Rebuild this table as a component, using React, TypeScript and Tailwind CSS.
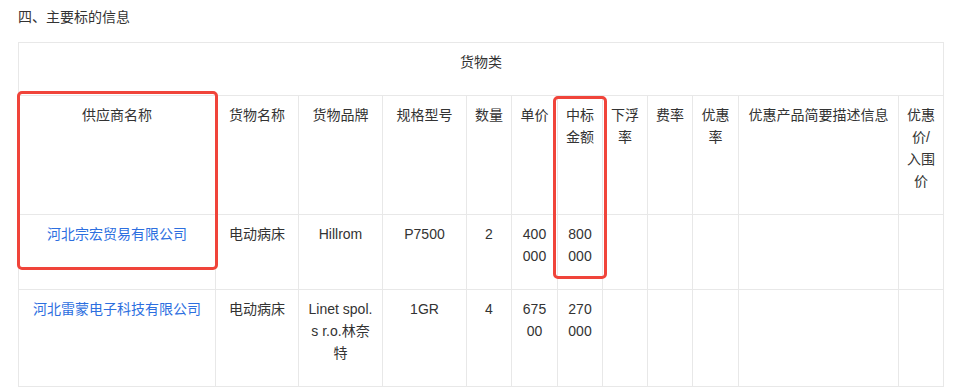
import React from "react";

const cols = [197, 83, 84, 84, 45, 46, 45, 45, 45, 46, 160, 45];
const colClasses = [
  "w-[197px]",
  "w-[83px]",
  "w-[84px]",
  "w-[84px]",
  "w-[45px]",
  "w-[46px]",
  "w-[45px]",
  "w-[45px]",
  "w-[45px]",
  "w-[46px]",
  "w-[160px]",
  "w-[45px]",
];

const headers = [
  "供应商名称",
  "货物名称",
  "货物品牌",
  "规格型号",
  "数量",
  "单价",
  "中标金额",
  "下浮率",
  "费率",
  "优惠率",
  "优惠产品简要描述信息",
  "优惠价/入围价",
];

const rows = [
  ["河北宗宏贸易有限公司", "电动病床", "Hillrom", "P7500", "2", "400000", "800000", "", "", "", "", ""],
  ["河北雷蒙电子科技有限公司", "电动病床", "Linet spol. s r.o.林奈特", "1GR", "4", "67500", "270000", "", "", "", "", ""],
];

const cell =
  "border border-[#e8e8e8] px-[8px] pt-[8px] pb-[22px] text-center align-top break-all leading-[22px]";

export default function App() {
  return (
    <div
      className="w-[954px] h-[392px] bg-white text-[14px] text-[#333333] px-[18px] pt-[6px]"
      style={{ fontFamily: '"Liberation Sans", "Noto Sans CJK SC", sans-serif' }}
    >
      <div className="leading-[22px]">四、主要标的信息</div>
      <div className="relative mt-[14px]">
        <table className="table-fixed border-collapse w-[926px]">
          <colgroup>
            {cols.map((_, i) => (
              <col key={i} className={colClasses[i]} />
            ))}
          </colgroup>
          <tbody>
            <tr>
              <td colSpan={12} className={cell}>
                货物类
              </td>
            </tr>
            <tr>
              {headers.map((h, i) => (
                <td key={i} className={cell}>
                  {h}
                </td>
              ))}
            </tr>
            {rows.map((r, ri) => (
              <tr key={ri}>
                {r.map((v, i) => (
                  <td key={i} className={cell}>
                    {i === 0 ? <span className="text-[#2d6fdf]">{v}</span> : v}
                  </td>
                ))}
              </tr>
            ))}
          </tbody>
        </table>
        <div className="absolute left-[-1px] top-[49px] w-[201px] h-[179px] border-[3px] border-[#f0443a] rounded-[5px]" />
        <div className="absolute left-[535px] top-[54px] w-[54px] h-[183px] border-[3px] border-[#f0443a] rounded-[5px]" />
      </div>
    </div>
  );
}
